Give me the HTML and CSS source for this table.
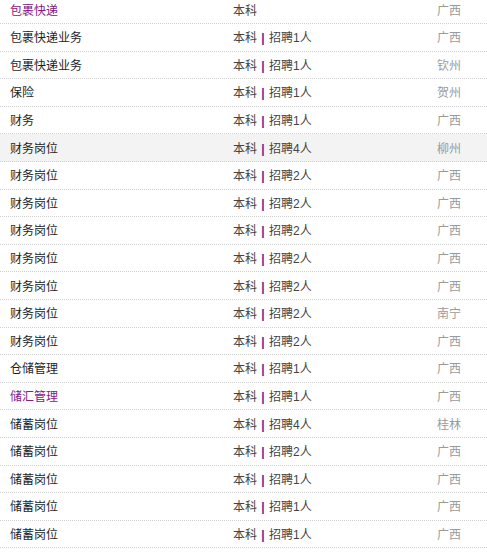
FILE: index.html
```html
<!DOCTYPE html>
<html lang="zh">
<head>
<meta charset="utf-8">
<link rel="stylesheet" href="styles.css">
</head>
<body>
<ul class="jobs">
  <li class="row"><a class="name visited">包裹快递</a><span class="req">本科</span><span class="city">广西</span></li>
  <li class="row"><a class="name">包裹快递业务</a><span class="req">本科 <i>|</i> 招聘1人</span><span class="city">广西</span></li>
  <li class="row"><a class="name">包裹快递业务</a><span class="req">本科 <i>|</i> 招聘1人</span><span class="city">钦州</span></li>
  <li class="row"><a class="name">保险</a><span class="req">本科 <i>|</i> 招聘1人</span><span class="city">贺州</span></li>
  <li class="row"><a class="name">财务</a><span class="req">本科 <i>|</i> 招聘1人</span><span class="city">广西</span></li>
  <li class="row active"><a class="name">财务岗位</a><span class="req">本科 <i>|</i> 招聘4人</span><span class="city">柳州</span></li>
  <li class="row"><a class="name">财务岗位</a><span class="req">本科 <i>|</i> 招聘2人</span><span class="city">广西</span></li>
  <li class="row"><a class="name">财务岗位</a><span class="req">本科 <i>|</i> 招聘2人</span><span class="city">广西</span></li>
  <li class="row"><a class="name">财务岗位</a><span class="req">本科 <i>|</i> 招聘2人</span><span class="city">广西</span></li>
  <li class="row"><a class="name">财务岗位</a><span class="req">本科 <i>|</i> 招聘2人</span><span class="city">广西</span></li>
  <li class="row"><a class="name">财务岗位</a><span class="req">本科 <i>|</i> 招聘2人</span><span class="city">广西</span></li>
  <li class="row"><a class="name">财务岗位</a><span class="req">本科 <i>|</i> 招聘2人</span><span class="city">南宁</span></li>
  <li class="row"><a class="name">财务岗位</a><span class="req">本科 <i>|</i> 招聘2人</span><span class="city">广西</span></li>
  <li class="row"><a class="name">仓储管理</a><span class="req">本科 <i>|</i> 招聘1人</span><span class="city">广西</span></li>
  <li class="row"><a class="name visited">储汇管理</a><span class="req">本科 <i>|</i> 招聘1人</span><span class="city">广西</span></li>
  <li class="row"><a class="name">储蓄岗位</a><span class="req">本科 <i>|</i> 招聘4人</span><span class="city">桂林</span></li>
  <li class="row"><a class="name">储蓄岗位</a><span class="req">本科 <i>|</i> 招聘2人</span><span class="city">广西</span></li>
  <li class="row"><a class="name">储蓄岗位</a><span class="req">本科 <i>|</i> 招聘1人</span><span class="city">广西</span></li>
  <li class="row"><a class="name">储蓄岗位</a><span class="req">本科 <i>|</i> 招聘1人</span><span class="city">广西</span></li>
  <li class="row"><a class="name">储蓄岗位</a><span class="req">本科 <i>|</i> 招聘1人</span><span class="city">广西</span></li>
</ul>
</body>
</html>
```
FILE: styles.css
```css
html, body {
  margin: 0;
  padding: 0;
  background: #fff;
}
body {
  font-family: "Liberation Sans", "Noto Sans CJK SC", sans-serif;
  font-size: 12px;
  color: #222;
  overflow: hidden;
}
.jobs {
  list-style: none;
  margin: -3.6px 0 0 0;
  padding: 0;
}
.row {
  box-sizing: border-box;
  height: 27.6px;
  display: grid;
  grid-template-columns: 223px 204px 1fr;
  align-items: center;
  padding: 2px 0 0 10px;
  border-bottom: 1px dotted #d0d0d0;
  line-height: 16px;
}
.row.active {
  background: #f3f3f3;
}
.name {
  color: #1e1e1e;
  text-decoration: none;
}
.name.visited {
  color: #80207f;
}
.req {
  color: #444;
  white-space: pre;
}
.req i {
  font-style: normal;
  color: #6f2690;
  font-weight: bold;
  margin: 0 1px;
}
.city {
  color: #9a9a9a;
}
```
